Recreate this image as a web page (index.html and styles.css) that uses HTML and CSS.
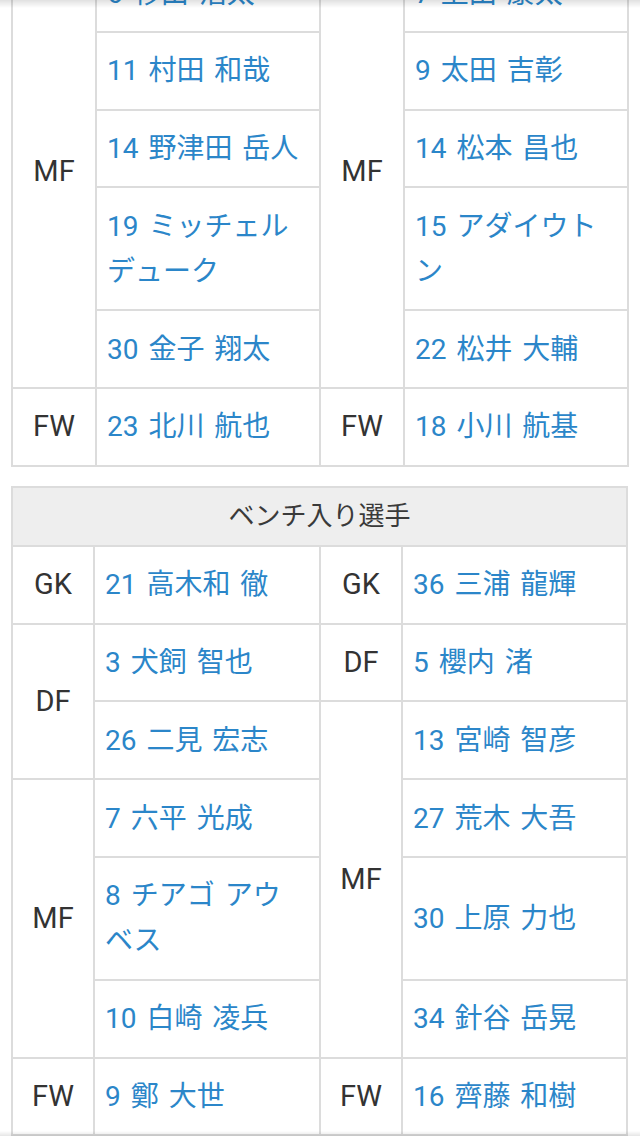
FILE: index.html
```html
<!DOCTYPE html>
<html lang="ja">
<head>
<meta charset="utf-8">
<title>メンバー</title>
<link rel="stylesheet" href="styles.css">
</head>
<body>
<div class="page">
  <table class="roster roster-start">
    <colgroup><col class="c-pos"><col class="c-name"><col class="c-pos"><col class="c-name"></colgroup>
    <tbody>
      <tr>
        <td class="pos" rowspan="5">MF</td>
        <td class="name"><a href="#">6 杉山 浩太</a></td>
        <td class="pos" rowspan="5">MF</td>
        <td class="name"><a href="#">7 上田 康太</a></td>
      </tr>
      <tr>
        <td class="name"><a href="#">11 村田 和哉</a></td>
        <td class="name"><a href="#">9 太田 吉彰</a></td>
      </tr>
      <tr>
        <td class="name"><a href="#">14 野津田 岳人</a></td>
        <td class="name"><a href="#">14 松本 昌也</a></td>
      </tr>
      <tr>
        <td class="name"><a href="#">19 ミッチェル<br>デューク</a></td>
        <td class="name"><a href="#">15 アダイウト<br>ン</a></td>
      </tr>
      <tr>
        <td class="name"><a href="#">30 金子 翔太</a></td>
        <td class="name"><a href="#">22 松井 大輔</a></td>
      </tr>
      <tr>
        <td class="pos">FW</td>
        <td class="name"><a href="#">23 北川 航也</a></td>
        <td class="pos">FW</td>
        <td class="name"><a href="#">18 小川 航基</a></td>
      </tr>
    </tbody>
  </table>

  <table class="roster roster-bench">
    <colgroup><col class="c-pos2"><col class="c-name2"><col class="c-pos2"><col class="c-name2b"></colgroup>
    <thead>
      <tr><th class="head" colspan="4">ベンチ入り選手</th></tr>
    </thead>
    <tbody>
      <tr>
        <td class="pos">GK</td>
        <td class="name"><a href="#">21 高木和 徹</a></td>
        <td class="pos">GK</td>
        <td class="name"><a href="#">36 三浦 龍輝</a></td>
      </tr>
      <tr>
        <td class="pos" rowspan="2">DF</td>
        <td class="name"><a href="#">3 犬飼 智也</a></td>
        <td class="pos">DF</td>
        <td class="name"><a href="#">5 櫻内 渚</a></td>
      </tr>
      <tr>
        <td class="name"><a href="#">26 二見 宏志</a></td>
        <td class="pos" rowspan="4">MF</td>
        <td class="name"><a href="#">13 宮崎 智彦</a></td>
      </tr>
      <tr>
        <td class="pos" rowspan="3">MF</td>
        <td class="name"><a href="#">7 六平 光成</a></td>
        <td class="name"><a href="#">27 荒木 大吾</a></td>
      </tr>
      <tr>
        <td class="name"><a href="#">8 チアゴ アウ<br>ベス</a></td>
        <td class="name"><a href="#">30 上原 力也</a></td>
      </tr>
      <tr>
        <td class="name"><a href="#">10 白崎 凌兵</a></td>
        <td class="name"><a href="#">34 針谷 岳晃</a></td>
      </tr>
      <tr>
        <td class="pos">FW</td>
        <td class="name"><a href="#">9 鄭 大世</a></td>
        <td class="pos">FW</td>
        <td class="name"><a href="#">16 齊藤 和樹</a></td>
      </tr>
    </tbody>
  </table>
</div>
<div class="shade shade-top"></div>
<div class="shade shade-bottom"></div>
</body>
</html>
```

FILE: styles.css
```css
html, body {
  margin: 0;
  padding: 0;
  background: #ffffff;
}

body {
  font-family: Roboto, "Noto Sans CJK JP", sans-serif;
  color: #333333;
  overflow: hidden;
}

.page {
  padding: 0 12px 0 11px;
}

.roster {
  width: 100%;
  border-collapse: collapse;
  table-layout: fixed;
  font-size: 28px;
  line-height: 45px;
}

.roster-start {
  margin-top: -47px;
}

.roster-bench {
  margin-top: 19px;
}

.c-pos { width: 84px; }
.c-name { width: 224px; }
.c-pos2 { width: 82px; }
.c-name2 { width: 226px; }
.c-name2b { width: auto; }

.roster td,
.roster th {
  border: 2px solid #dcdcdc;
}

.pos {
  text-align: center;
  vertical-align: middle;
  padding: 15.5px 2px 15.3px;
  font-size: 29px;
  color: #333333;
}

.name {
  padding: 15.5px 8px 15.3px 10px;
  text-align: left;
  vertical-align: middle;
  word-spacing: 3px;
}

.name a {
  color: #2b86c9;
  text-decoration: none;
}

.head {
  background: #eeeeee;
  font-weight: normal;
  font-size: 26px;
  line-height: 43px;
  padding: 7px 0;
  color: #3a3a3a;
  text-align: center;
}

.shade {
  position: fixed;
  left: 0;
  right: 0;
  pointer-events: none;
}

.shade-top {
  top: 0;
  height: 8px;
  background: linear-gradient(to bottom, rgba(0,0,0,0.12), rgba(0,0,0,0));
}

.shade-bottom {
  bottom: 0;
  height: 5px;
  background: linear-gradient(to top, rgba(0,0,0,0.10), rgba(0,0,0,0));
}
```
